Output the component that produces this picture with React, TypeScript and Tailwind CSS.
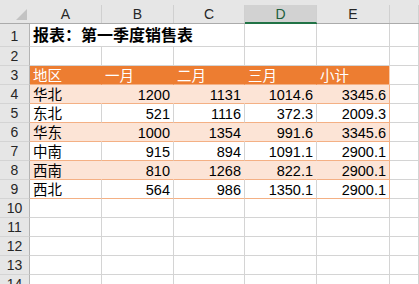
import React from "react";

const COLS = "grid grid-cols-[30px_72px_72px_71px_72px_73px_1fr]";

type Row = [string, string, string, string, string];

const sales: Row[] = [
  ["华北", "1200", "1131", "1014.6", "3345.6"],
  ["东北", "521", "1116", "372.3", "2009.3"],
  ["华东", "1000", "1354", "991.6", "3345.6"],
  ["中南", "915", "894", "1091.1", "2900.1"],
  ["西南", "810", "1268", "822.1", "2900.1"],
  ["西北", "564", "986", "1350.1", "2900.1"],
];

const headers = ["地区", "一月", "二月", "三月", "小计"];

// grey row number on the left edge
const RowNum = ({ n, tall }: { n: number; tall?: boolean }) => (
  <div
    className={`flex items-end justify-center border-r border-b border-r-[#b4b4b4] border-b-[#d4d4d4] bg-[#e6e6e6] text-[14px] leading-none text-[#262626] ${
      tall ? "h-[23px] pb-[3px]" : "h-[19px] pb-[2px]"
    }`}
  >
    {n}
  </div>
);

const Empty = () => <div className="h-full border-r border-b border-[#d4d4d4]" />;

const ColHead = ({ label, active }: { label: string; active?: boolean }) => (
  <div
    className={`h-[24px] border-b bg-[#e6e6e6] pt-[5px] ${
      active ? "border-b-[#217346]" : "border-b-[#ababab]"
    }`}
  >
    <div
      className={`flex h-[18px] items-center justify-center border-r border-r-[#d0d0d0] text-[14px] leading-none ${
        active ? "border-b border-b-[#217346] bg-[#d2d2d2] text-[#1d5f3c]" : "text-[#262626]"
      }`}
    >
      {label}
    </div>
  </div>
);

export default function App() {
  return (
    <div className="h-[284px] w-[419px] overflow-hidden bg-white font-['Liberation_Sans','Noto_Sans_CJK_SC',sans-serif] text-black">
      {/* column letters */}
      <div className={COLS}>
        <div className="relative h-[24px] border-b border-b-[#ababab] bg-[#e6e6e6]">
          <svg className="absolute right-[3px] bottom-[3px]" width="11" height="11" viewBox="0 0 11 11">
            <polygon points="11,0 11,11 0,11" fill="#c3c3c3" />
          </svg>
        </div>
        <ColHead label="A" />
        <ColHead label="B" />
        <ColHead label="C" />
        <ColHead label="D" active />
        <ColHead label="E" />
        <ColHead label="" />
      </div>

      {/* row 1: title overflowing across A..C */}
      <div className={`${COLS} h-[23px]`}>
        <RowNum n={1} tall />
        <div className="col-span-3 flex h-full items-end border-r border-b border-[#d4d4d4] pb-[2px] pl-[3px] text-[16px] leading-none font-bold whitespace-nowrap">
          报表：第一季度销售表
        </div>
        <Empty />
        <Empty />
        <Empty />
      </div>

      {/* row 2 */}
      <div className={`${COLS} h-[19px]`}>
        <RowNum n={2} />
        <Empty />
        <Empty />
        <Empty />
        <Empty />
        <Empty />
        <Empty />
      </div>

      {/* row 3: table header */}
      <div className={`${COLS} h-[19px]`}>
        <RowNum n={3} />
        {headers.map((h, i) => (
          <div
            key={h}
            className={`flex h-full items-end border-r border-b border-b-[#f4b084] bg-[#ed7d31] pb-[1px] pl-[3px] text-[14.5px] leading-none text-white ${
              i === 4 ? "border-r-[#f8cbad]" : "border-r-[#ed7d31]"
            }`}
          >
            {h}
          </div>
        ))}
        <Empty />
      </div>

      {/* rows 4-9: data, banded */}
      {sales.map((r, ri) => {
        const band = ri % 2 === 0;
        return (
          <div key={r[0]} className={`${COLS} h-[19px]`}>
            <RowNum n={ri + 4} />
            {r.map((v, ci) => (
              <div
                key={ci}
                className={`flex h-full items-end border-r border-b border-b-[#f4b084] pb-[1px] text-[14.5px] leading-none whitespace-nowrap ${
                  ci === 0 ? "justify-start pl-[3px]" : "justify-end pr-[3px]"
                } ${band ? "bg-[#fce4d6]" : ""} ${
                  ci === 4 ? "border-r-[#f4b084]" : band ? "border-r-[#fce4d6]" : "border-r-[#d4d4d4]"
                }`}
              >
                {v}
              </div>
            ))}
            <Empty />
          </div>
        );
      })}

      {/* rows 10-14: blank */}
      {[10, 11, 12, 13, 14].map((n) => (
        <div key={n} className={`${COLS} h-[19px]`}>
          <RowNum n={n} />
          <Empty />
          <Empty />
          <Empty />
          <Empty />
          <Empty />
          <Empty />
        </div>
      ))}
    </div>
  );
}
